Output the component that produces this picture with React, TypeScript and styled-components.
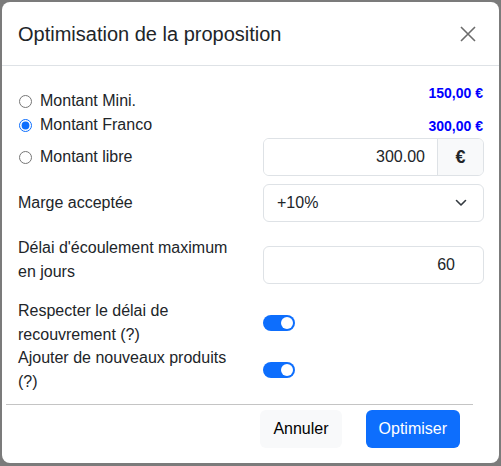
import React, { useState } from "react";
import styled, { createGlobalStyle } from "styled-components";

const GlobalStyle = createGlobalStyle`
	html, body {
		margin: 0;
		padding: 0;
		background: #7b7b7b;
		font-family: "Liberation Sans", Arial, sans-serif;
		color: #212529;
	}
	* {
		box-sizing: border-box;
	}
`;

const App = () => {
	const [mode, setMode] = useState("franco");
	const [respect, setRespect] = useState(true);
	const [ajout, setAjout] = useState(true);

	return (
		<>
			<GlobalStyle />
			<Backdrop>
				<Modal>
					<Header>
						<Title>Optimisation de la proposition</Title>
						<CloseButton aria-label='Fermer'>
							<svg width='16' height='16' viewBox='0 0 16 16'>
								<path
									d='M1 1 L15 15 M15 1 L1 15'
									stroke='#6c6c6c'
									strokeWidth='1.6'
									fill='none'
								/>
							</svg>
						</CloseButton>
					</Header>
					<Body>
						<AmountRow $first>
							<RadioLabel>
								<Radio
									type='radio'
									checked={mode === "mini"}
									onChange={() => setMode("mini")}
								/>
								Montant Mini.
							</RadioLabel>
							<Amount>150,00 €</Amount>
						</AmountRow>
						<AmountRow>
							<RadioLabel>
								<Radio
									type='radio'
									checked={mode === "franco"}
									onChange={() => setMode("franco")}
								/>
								Montant Franco
							</RadioLabel>
							<Amount>300,00 €</Amount>
						</AmountRow>
						<FieldRow $align='center' $gapTop={1}>
							<RadioLabel>
								<Radio
									type='radio'
									checked={mode === "libre"}
									onChange={() => setMode("libre")}
								/>
								Montant libre
							</RadioLabel>
							<InputGroup>
								<TextInput defaultValue='300.00' $padRight={12} />
								<Addon>€</Addon>
							</InputGroup>
						</FieldRow>
						<FieldRow $align='center' $gapTop={8}>
							<Label>Marge acceptée</Label>
							<Select>
								<span>+10%</span>
								<svg width='12' height='8' viewBox='0 0 12 8'>
									<path
										d='M1.5 1.5 L6 6 L10.5 1.5'
										stroke='#343a40'
										strokeWidth='1.6'
										fill='none'
										strokeLinecap='round'
										strokeLinejoin='round'
									/>
								</svg>
							</Select>
						</FieldRow>
						<FieldRow $align='end' $gapTop={14}>
							<Label>Délai d'écoulement maximum en jours</Label>
							<TextInput defaultValue='60' $padRight={28} $bordered />
						</FieldRow>
						<FieldRow $align='center' $gapTop={15}>
							<Label>Respecter le délai de recouvrement (?)</Label>
							<Switch $on={respect} onClick={() => setRespect(!respect)} />
						</FieldRow>
						<FieldRow $align='center' $gapTop={-1}>
							<Label>Ajouter de nouveaux produits (?)</Label>
							<Switch $on={ajout} onClick={() => setAjout(!ajout)} />
						</FieldRow>
					</Body>
					<Footer>
						<Button $variant='light'>Annuler</Button>
						<Button $variant='primary'>Optimiser</Button>
					</Footer>
				</Modal>
			</Backdrop>
		</>
	);
};

const Backdrop = styled.div`
	width: 501px;
	height: 466px;
	padding: 2px 2px 3px 2px;
`;

const Modal = styled.div`
	background: #fff;
	border-radius: 8px;
	height: 461px;
	display: flex;
	flex-direction: column;
`;

const Header = styled.header`
	display: flex;
	align-items: center;
	justify-content: space-between;
	padding: 17px 16px 16px 16px;
	border-bottom: 1px solid #dee2e6;
	height: 64px;
`;

const Title = styled.h5`
	margin: 0;
	font-size: 20px;
	font-weight: 400;
	line-height: 30px;
	color: #212529;
`;

const CloseButton = styled.button`
	border: none;
	background: transparent;
	padding: 0;
	margin-right: 7px;
	display: flex;
	cursor: pointer;
`;

const Body = styled.section`
	padding: 16px 15px 0 16px;
	flex: 1;
`;

const AmountRow = styled.div<{ $first?: boolean }>`
	display: flex;
	justify-content: space-between;
	align-items: ${(p) => (p.$first ? "flex-end" : "center")};
	height: ${(p) => (p.$first ? "31px" : "24px")};
	span {
		align-self: ${(p) => (p.$first ? "flex-start" : "center")};
	}
`;

const RadioLabel = styled.label`
	display: flex;
	align-items: center;
	gap: 8px;
	font-size: 16px;
	line-height: 24px;
	cursor: pointer;
`;

const Radio = styled.input`
	width: 13px;
	height: 13px;
	margin: 0 0 0 1px;
	accent-color: #0d6efd;
`;

const Amount = styled.span`
	color: #0000ff;
	font-weight: 700;
	font-size: 14px;
	line-height: 20px;
	margin-right: 1px;
	margin-top: 1px;
`;

const FieldRow = styled.div<{ $align: string; $gapTop: number }>`
	display: grid;
	grid-template-columns: 233px 1fr;
	column-gap: 12px;
	align-items: ${(p) => p.$align};
	margin-top: ${(p) => p.$gapTop}px;
`;

const Label = styled.div`
	max-width: 229px;
	font-size: 16px;
	line-height: 24px;
	color: #212529;
`;

const InputGroup = styled.div`
	display: flex;
	height: 38px;
	border: 1px solid #dee2e6;
	border-radius: 6px;
	overflow: hidden;
`;

const TextInput = styled.input<{ $padRight: number; $bordered?: boolean }>`
	flex: 1;
	min-width: 0;
	width: 100%;
	height: ${(p) => (p.$bordered ? "38px" : "36px")};
	border: ${(p) => (p.$bordered ? "1px solid #dee2e6" : "none")};
	border-radius: ${(p) => (p.$bordered ? "6px" : "0")};
	padding: 0 ${(p) => p.$padRight}px 0 12px;
	text-align: right;
	font-family: "Liberation Sans", Arial, sans-serif;
	font-size: 16px;
	color: #212529;
	outline: none;
`;

const Addon = styled.span`
	width: 46px;
	display: flex;
	align-items: center;
	justify-content: center;
	background: #f8f9fa;
	border-left: 1px solid #dee2e6;
	font-size: 18px;
	font-weight: 700;
	color: #212529;
`;

const Select = styled.div`
	height: 38px;
	border: 1px solid #dee2e6;
	border-radius: 6px;
	display: flex;
	align-items: center;
	justify-content: space-between;
	padding: 0 16px 0 13px;
	font-size: 16px;
	color: #212529;
`;

const Switch = styled.button<{ $on: boolean }>`
	width: 32px;
	height: 16px;
	border-radius: 8px;
	border: none;
	padding: 0 2px;
	background: ${(p) => (p.$on ? "#0d6efd" : "#dee2e6")};
	display: flex;
	align-items: center;
	justify-content: ${(p) => (p.$on ? "flex-end" : "flex-start")};
	cursor: pointer;
	&::after {
		content: "";
		width: 12px;
		height: 12px;
		border-radius: 50%;
		background: #fff;
	}
`;

const Footer = styled.footer`
	display: flex;
	justify-content: flex-end;
	gap: 24px;
	margin: 0 26px 0 4px;
	padding: 5px 13px 15px 0;
	border-top: 1px solid #c4c4c4;
`;

const Button = styled.button<{ $variant: "light" | "primary" }>`
	height: 38px;
	padding: 0 13px;
	border: none;
	border-radius: 6px;
	font-family: "Liberation Sans", Arial, sans-serif;
	font-size: 16px;
	background: ${(p) => (p.$variant === "primary" ? "#0d6efd" : "#f8f9fa")};
	color: ${(p) => (p.$variant === "primary" ? "#fff" : "#000")};
	cursor: pointer;
`;

export default App;
